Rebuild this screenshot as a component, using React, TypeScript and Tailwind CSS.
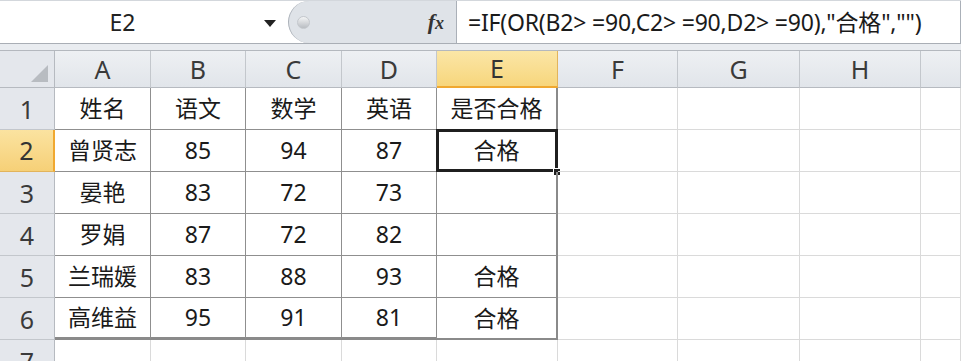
import React from 'react';

const cols = ['A', 'B', 'C', 'D', 'E', 'F', 'G', 'H', ''];

const rows: string[][] = [
  ['姓名', '语文', '数学', '英语', '是否合格'],
  ['曾贤志', '85', '94', '87', '合格'],
  ['晏艳', '83', '72', '73', ''],
  ['罗娟', '87', '72', '82', ''],
  ['兰瑞媛', '83', '88', '93', '合格'],
  ['高维益', '95', '91', '81', '合格'],
];

const font = 'font-["Noto_Sans","Noto_Sans_CJK_SC",sans-serif]';

const App: React.FC = () => {
  return (
    <div className={`w-[961px] h-[361px] overflow-hidden bg-white ${font}`}>
      {/* Formula bar */}
      <div className="flex h-[44px] border-t border-b border-t-[#d3d7dc] border-b-[#a9aeb5]">
        <div className="relative w-[288px] flex items-center bg-white">
          <span className="w-[245px] text-center text-[23px] text-[#222] leading-none">E2</span>
          <span className="absolute left-[264px] top-[19px] w-0 h-0 border-l-[6px] border-r-[6px] border-t-[7px] border-l-transparent border-r-transparent border-t-[#222]" />
        </div>
        <div className="w-[168px] flex items-center justify-between bg-[#dfe3e8] rounded-l-[22px] border-l border-[#aab0b8] pl-[8px] pr-[12px]">
          <span className="w-[13px] h-[13px] rounded-full bg-gradient-to-b from-[#f4f5f6] to-[#b9bdc2] border border-[#c3c7cc]" />
          <span className="font-['Liberation_Serif',serif] italic font-bold text-[22px] text-[#333] leading-none">
            f<span className="text-[18px]">x</span>
          </span>
        </div>
        <div className="flex-1 flex items-center bg-white border-l border-r border-[#aab0b8] pl-[11px] text-[23px] text-[#1a1a1a] whitespace-nowrap tracking-[-0.2px]">
          =IF(OR(B2&gt; =90,C2&gt; =90,D2&gt; =90),"合格","")
        </div>
      </div>
      <div className="h-[6px] bg-[#e9ecf0]" />

      {/* Grid */}
      <div className="grid grid-cols-[55px_96px_95px_96px_95px_121px_120px_122px_121px_1fr] grid-rows-[37px_42px_42px_42px_42px_42px_42px_42px] border-t border-[#b4b8be]">
        {/* corner */}
        <div className="relative bg-[#e4e7ec] border-r border-b border-[#b6bac0]">
          <span className="absolute right-[6px] bottom-[5px] w-0 h-0 border-l-[17px] border-b-[17px] border-l-transparent border-b-[#b8bcc1]" />
        </div>
        {cols.map((c, i) =>
          i === 4 ? (
            <div
              key={c}
              className="flex items-center justify-center bg-gradient-to-b from-[#fbe6a6] to-[#f7d67c] border-r border-b-2 border-r-[#e2b45c] border-b-[#f0a830] text-[25px] text-[#333] leading-none"
            >
              {c}
            </div>
          ) : (
            <div
              key={c || 'I'}
              className="flex items-center justify-center bg-gradient-to-b from-[#eef0f3] to-[#e1e5ea] border-r border-b border-r-[#c3c7cc] border-b-[#b6bac0] text-[25px] text-[#3a3a3a] leading-none"
            >
              {c}
            </div>
          )
        )}

        {[...rows, null].map((r, ri) => (
          <React.Fragment key={ri}>
            <div
              className={
                ri === 1
                  ? 'flex items-center justify-center bg-gradient-to-b from-[#fbe3a0] to-[#f6d077] border-r-2 border-b border-r-[#f0a830] border-b-[#e2b45c] text-[25px] text-[#333] leading-none'
                  : 'flex items-start pt-[7px] justify-center bg-[#e4e7ec] border-r border-b border-r-[#b6bac0] border-b-[#c3c7cc] text-[25px] text-[#3a3a3a] leading-none'
              }
            >
              <span className={ri === 1 ? '' : 'mt-[2px]'}>{ri + 1}</span>
            </div>
            {cols.map((_, ci) => {
              const inTable = r !== null && ci < 5;
              const text = r && ci < 5 ? r[ci] : '';
              let cls = 'relative flex items-center justify-center text-[23px] text-[#1a1a1a] leading-none border-r border-b ';
              if (inTable) {
                cls += ci === 4 ? 'border-r-2 border-r-[#8a8a8a] ' : 'border-r-[#8f8f8f] ';
                cls += ri === 5 ? (ci === 4 ? 'border-b-2 border-b-[#8a8a8a]' : 'border-b-[3px] border-b-[#8a8a8a]') : 'border-b-[#8f8f8f]';
              } else {
                cls += 'border-r-[#dadada] border-b-[#dadada]';
              }
              return (
                <div key={ci} className={cls}>
                  {text}
                  {ri === 1 && ci === 4 && (
                    <>
                      <span className="absolute left-[-1px] top-[-1px] right-[-2px] bottom-[-1px] border-[3px] border-[#1f1f1f]" />
                      <span className="absolute right-[-5px] bottom-[-5px] w-[8px] h-[8px] bg-[#1f1f1f] border border-white" />
                    </>
                  )}
                </div>
              );
            })}
          </React.Fragment>
        ))}
      </div>
    </div>
  );
};

export default App;
